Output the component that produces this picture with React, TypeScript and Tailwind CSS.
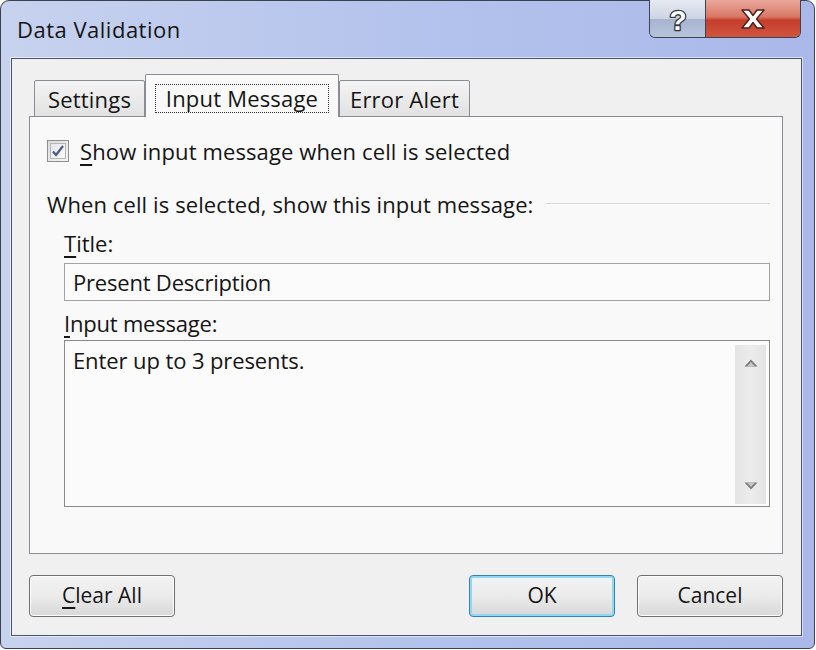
import type { ReactNode } from 'react'

const font = "font-['Open_Sans','Noto_Sans',sans-serif]"

function Tab({ label, active, w }: { label: string; active?: boolean; w: string }) {
  if (active) {
    return (
      <div className={`${w} h-[43px] flex items-start pt-[9px] justify-center border border-b-0 border-[#898c95] bg-[#f9f9f9] rounded-t-[2px]`}>
        <span className="w-[174px] h-[29px] flex items-center justify-center border border-dotted border-[#333] text-[22px] tracking-[0.2px] text-[#151515]">{label}</span>
      </div>
    )
  }
  return (
    <div className={`${w} h-[37px] flex items-center justify-center pt-[2px] border border-[#898c95] bg-gradient-to-b from-[#f4f4f4] to-[#e2e2e2] text-[22px] tracking-[0.2px] text-[#151515] rounded-t-[2px]`}>
      {label}
    </div>
  )
}

function Button({ children, primary, className = '' }: { children: ReactNode; primary?: boolean; className?: string }) {
  return (
    <button
      className={`w-[146px] h-[42px] rounded-[4px] border text-[21px] text-[#151515] bg-gradient-to-b from-[#f3f3f3] via-[#ebebeb] to-[#d8d8d8] ${
        primary
          ? 'border-[#3c7fb1] shadow-[inset_0_0_0_2px_#8fd8f8]'
          : 'border-[#707070] shadow-[inset_0_0_0_1px_#fcfcfc]'
      } ${className}`}
    >
      {children}
    </button>
  )
}

export default function App() {
  return (
    <div className={`w-[816px] h-[650px] bg-white overflow-hidden ${font}`}>
      <div className="w-[815px] h-[649px] flex flex-col rounded-t-[9px] rounded-b-[6px] border border-[#39424f] bg-gradient-to-r from-[#c7d2ee] via-[#b4c3ec] to-[#a9b8e8] pl-[10px] pr-[12px] pb-[12px]">
        {/* title bar */}
        <div className="h-[57px] flex justify-between">
          <div className="pt-[12px] ml-[6px] text-[22px] text-[#151515] tracking-[0.5px]">Data Validation</div>
          <div className="flex h-[38px] -mt-px mr-[1px] border border-t-0 border-[#3b4452] rounded-b-[6px] overflow-hidden">
            <div className="w-[56px] flex items-center justify-center border-r border-[#3b4452] bg-[linear-gradient(to_bottom,#e6eaf2_0%,#cdd4e4_50%,#a8b3cf_52%,#b8c3dc_100%)]">
              <svg width="26" height="32" viewBox="0 0 26 32">
                <text x="13" y="27" textAnchor="middle" fontSize="28" fontWeight="bold" fontFamily="Liberation Sans, sans-serif" fill="#ffffff" stroke="#2f3540" strokeWidth="2.6" strokeLinejoin="round" paintOrder="stroke">?</text>
              </svg>
            </div>
            <div className="w-[94px] flex items-center justify-center bg-[linear-gradient(to_bottom,#e9a99c_0%,#d97766_45%,#c53d29_55%,#d0553f_100%)]">
              <svg width="28" height="22" viewBox="0 0 28 22">
                <path d="M3 2h7l4 5.5 4-5.5h7l-7.5 9 7.5 9h-7l-4-5.5-4 5.5H3l7.5-9z" fill="#fff" stroke="#4a211c" strokeWidth="1.4" strokeLinejoin="round" />
              </svg>
            </div>
          </div>
        </div>

        {/* client area */}
        <div className="flex-1 flex flex-col bg-[#f0f0f0] border border-[#4a5566] shadow-[0_0_0_1px_rgba(255,255,255,0.55)] pl-[17px] pr-[18px] pt-[15px]">
          <div className="flex items-end ml-[5px] -mb-px relative z-10">
            <Tab label="Settings" w="w-[111px]" />
            <Tab label="Input Message" active w="w-[194px]" />
            <Tab label="Error Alert" w="w-[131px]" />
          </div>
          <div className="h-[438px] border border-[#898c95] bg-[#f9f9f9] pr-[12px] flex flex-col text-[#151515]">
            <div className="mt-[22px] ml-[17px] h-[24px] flex items-center gap-[11px]">
              <div className="w-[22px] h-[22px] border border-[#8e8f8f] bg-gradient-to-br from-[#dcdcdc] to-[#f6f6f6] p-[2px]">
                <div className="w-full h-full border border-[#b5b5b5] bg-gradient-to-br from-[#e3e6ea] to-[#fafafa] flex items-center justify-center">
                  <svg width="14" height="14" viewBox="0 0 14 14">
                    <path d="M2 7.5l3 3.5 7-9" fill="none" stroke="#4a5b86" strokeWidth="2.2" />
                  </svg>
                </div>
              </div>
              <span className="text-[22px] tracking-[0.12px]"><span className="underline underline-offset-[4px]">S</span>how input message when cell is selected</span>
            </div>
            <div className="mt-[28px] ml-[17px] h-[26px] flex items-center gap-[12px]">
              <span className="text-[22px] tracking-[0.1px]">When cell is selected, show this input message:</span>
              <div className="flex-1 h-[2px] border-t border-[#d5d5d5] bg-white" />
            </div>
            <div className="ml-[34px] mt-[13px] h-[26px] flex items-center text-[22px]">
              <span><span className="underline underline-offset-[4px]">T</span>itle:</span>
            </div>
            <div className="ml-[34px] mt-[7px] h-[38px] border border-[#a3a3a3] bg-[#fbfbfb] pl-[8px] flex items-center text-[22px] tracking-[-0.2px]">
              Present Description
            </div>
            <div className="ml-[34px] mt-[9px] h-[26px] flex items-center text-[22px] tracking-[-0.2px]">
              <span><span className="underline underline-offset-[4px]">I</span>nput message:</span>
            </div>
            <div className="ml-[34px] mt-[4px] h-[167px] border border-[#8a8a8a] bg-[#fbfbfb] flex">
              <div className="flex-1 pl-[8px] pt-[6px] text-[22px] tracking-[-0.1px] leading-[26px]">Enter up to 3 presents.</div>
              <div className="w-[31px] mt-[4px] mb-[2px] mr-[3px] bg-gradient-to-r from-[#e4e4e4] via-[#ececec] to-[#e4e4e4] flex flex-col items-center justify-between py-[14px]">
                <svg width="14" height="8" viewBox="0 0 14 8">
                  <path d="M7 0.5L13.5 7.5H0.5z" fill="#7a7a7a" />
                  <path d="M7 3L11 7.5H3z" fill="#c8c8c8" />
                </svg>
                <svg width="14" height="8" viewBox="0 0 14 8">
                  <path d="M7 7.5L13.5 0.5H0.5z" fill="#7a7a7a" />
                  <path d="M7 5L11 0.5H3z" fill="#c8c8c8" />
                </svg>
              </div>
            </div>
          </div>
          <div className="mt-[21px] flex items-center">
            <Button><span className="underline underline-offset-[4px]">C</span>lear All</Button>
            <div className="flex-1" />
            <Button primary>OK</Button>
            <Button className="ml-[22px]">Cancel</Button>
          </div>
        </div>
      </div>
    </div>
  )
}
